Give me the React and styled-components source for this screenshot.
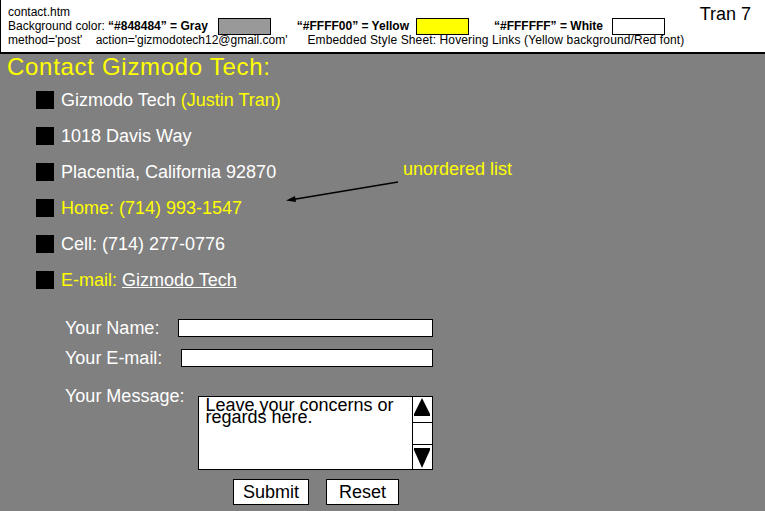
import React from "react";
import styled, { createGlobalStyle } from "styled-components";

const Global = createGlobalStyle`
  html, body { margin: 0; padding: 0; background: #808080; }
  body { font-family: "Liberation Sans", Arial, sans-serif; width: 765px; height: 511px; overflow: hidden; }
`;

const Header = styled.header`
  display: flex;
  justify-content: space-between;
  background: #fff;
  color: #000;
  height: 54px;
  border-bottom: 2px solid #000;
  border-left: 1px solid #000;
  padding: 6px 14px 0 7px;
  box-sizing: border-box;
  font-size: 12px;
`;

const HeaderLines = styled.div`
  display: flex;
  flex-direction: column;
`;

const Line = styled.div`
  display: flex;
  align-items: center;
  white-space: pre;
  height: ${(p) => p.$h || 13}px;
  margin-top: ${(p) => p.$mt || 0}px;
`;

const Seg = styled.span`
  margin-left: ${(p) => p.$ml || 0}px;
  font-weight: ${(p) => (p.$bold ? 700 : 400)};
  letter-spacing: ${(p) => p.$ls || 0}px;
`;

const Swatch = styled.span`
  display: inline-block;
  width: 53px;
  height: 17px;
  box-sizing: border-box;
  border: 1px solid #000;
  background: ${(p) => p.$c};
  margin-left: ${(p) => p.$ml || 0}px;
`;

const Tran = styled.div`
  font-size: 18px;
  line-height: 18px;
  margin-top: -1px;
`;

const Main = styled.main`
  position: relative;
  padding-left: 7px;
  color: #fff;
`;

const Title = styled.h1`
  margin: 0;
  font-weight: 400;
  font-size: 24px;
  letter-spacing: 0.7px;
  line-height: 25px;
  color: #ffff00;
`;

const List = styled.ul`
  list-style: none;
  margin: 3px 0 0 0;
  padding: 0 0 0 29px;
`;

const Item = styled.li`
  display: flex;
  align-items: center;
  height: 36px;
  font-size: 18px;
`;

const Bullet = styled.span`
  width: 18px;
  height: 18px;
  background: #000;
  margin-right: 7px;
  flex: none;
`;

const Yellow = styled.span`
  color: #ffff00;
`;

const Link = styled.a`
  color: #fff;
  text-decoration: underline;
`;

const Note = styled.div`
  position: absolute;
  left: 403px;
  top: 105px;
  font-size: 18px;
  color: #ffff00;
`;

const Arrow = styled.svg`
  position: absolute;
  left: 280px;
  top: 122px;
`;

const Form = styled.form`
  width: 368px;
  margin: 15px 0 0 58px;
  font-size: 18px;
`;

const FieldRow = styled.div`
  display: flex;
  align-items: center;
  height: 30px;
  white-space: nowrap;
`;

const Input = styled.input`
  flex: 1;
  min-width: 0;
  height: 18px;
  box-sizing: border-box;
  border: 1px solid #000;
  background: #fff;
  margin-left: ${(p) => p.$ml}px;
  padding: 0;
`;

const MessageRow = styled.div`
  display: flex;
  align-items: flex-start;
  margin-top: 12px;
`;

const MsgLabel = styled.span`
  flex: none;
  white-space: nowrap;
  line-height: 22px;
`;

const Box = styled.div`
  display: flex;
  flex: none;
  width: 235px;
  height: 74px;
  box-sizing: border-box;
  border: 1px solid #000;
  background: #fff;
  margin: 11px 0 0 14px;
`;

const Area = styled.textarea`
  flex: 1;
  min-width: 0;
  border: none;
  resize: none;
  outline: none;
  overflow: hidden;
  padding: 2px 4px 0 6px;
  font-family: "Liberation Sans", Arial, sans-serif;
  font-size: 18px;
  line-height: 12px;
  color: #000;
  background: #fff;
`;

const Scroll = styled.svg`
  flex: none;
  display: block;
`;

const Buttons = styled.div`
  display: flex;
  gap: 17px;
  margin: 9px 0 0 168px;
`;

const Button = styled.button`
  width: ${(p) => p.$w}px;
  height: 26px;
  box-sizing: border-box;
  border: 1px solid #000;
  background: #fff;
  font-family: "Liberation Sans", Arial, sans-serif;
  font-size: 18px;
  color: #000;
  padding: 0;
  border-radius: 0;
`;

export default function App() {
  return (
    <>
      <Global />
      <Header>
        <HeaderLines>
          <Line $h={12}>contact.htm</Line>
          <Line $h={18} $mt={-1}>
            <Seg>Background color: </Seg>
            <Seg $bold>“#848484” = Gray</Seg>
            <Swatch $c="#999999" $ml={10} />
            <Seg $bold $ml={26}>“#FFFF00” = Yellow</Seg>
            <Swatch $c="#ffff00" $ml={7} />
            <Seg $bold $ml={25}>“#FFFFFF” = White</Seg>
            <Swatch $c="#ffffff" $ml={9} />
          </Line>
          <Line $h={12} $mt={-1}>
            <Seg>method='post'    action='gizmodotech12@gmail.com'</Seg>
            <Seg $ml={20} $ls={0.12}>Embedded Style Sheet: Hovering Links (Yellow background/Red font)</Seg>
          </Line>
        </HeaderLines>
        <Tran>Tran 7</Tran>
      </Header>
      <Main>
        <Title>Contact Gizmodo Tech:</Title>
        <List>
          <Item><Bullet />Gizmodo Tech&nbsp;<Yellow>(Justin Tran)</Yellow></Item>
          <Item><Bullet />1018 Davis Way</Item>
          <Item><Bullet />Placentia, California 92870</Item>
          <Item><Bullet /><Yellow>Home: (714) 993-1547</Yellow></Item>
          <Item><Bullet />Cell: (714) 277-0776</Item>
          <Item><Bullet /><Yellow>E-mail:</Yellow>&nbsp;<Link href="#">Gizmodo Tech</Link></Item>
        </List>
        <Note>unordered list</Note>
        <Arrow width="125" height="30" viewBox="0 0 125 30">
          <line x1="118" y1="6" x2="10" y2="24" stroke="#000" strokeWidth="1.5" />
          <polygon points="6,24.5 15,20 16,26" fill="#000" />
        </Arrow>
        <Form onSubmit={(e) => e.preventDefault()}>
          <FieldRow>Your Name:<Input $ml={19} /></FieldRow>
          <FieldRow>Your E-mail:<Input $ml={19} /></FieldRow>
          <MessageRow>
            <MsgLabel>Your Message:</MsgLabel>
            <Box>
              <Area defaultValue="Leave your concerns or regards here." />
              <Scroll width="20" height="72" viewBox="0 0 20 72">
                <line x1="0.5" y1="0" x2="0.5" y2="72" stroke="#000" />
                <polygon points="10,1 2,17 18,17" fill="#000" />
                <rect x="2" y="17" width="16" height="2" fill="#000" />
                <line x1="0" y1="25.5" x2="20" y2="25.5" stroke="#000" />
                <line x1="0" y1="47.5" x2="20" y2="47.5" stroke="#000" />
                <rect x="2" y="51" width="16" height="2" fill="#000" />
                <polygon points="2,53 18,53 10,71" fill="#000" />
              </Scroll>
            </Box>
          </MessageRow>
          <Buttons>
            <Button type="submit" $w={76}>Submit</Button>
            <Button type="reset" $w={73}>Reset</Button>
          </Buttons>
        </Form>
      </Main>
    </>
  );
}
